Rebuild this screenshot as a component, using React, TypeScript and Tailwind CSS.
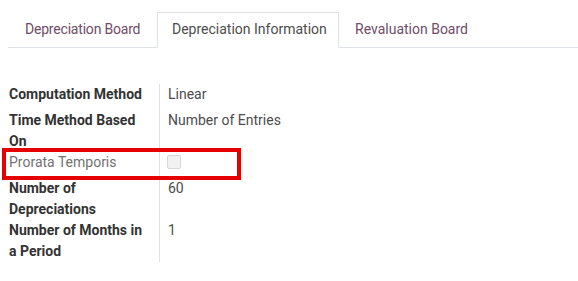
import React from "react";

const rows: { label: string; value: React.ReactNode; muted?: boolean; h: string }[] = [
  { label: "Computation Method", value: "Linear", h: "min-h-[26px]" },
  { label: "Time Method Based On", value: "Number of Entries", h: "min-h-[26px]" },
  { label: "Prorata Temporis", value: "checkbox", muted: true, h: "min-h-[26px]" },
  { label: "Number of Depreciations", value: "60", h: "min-h-[26px]" },
  { label: "Number of Months in a Period", value: "1", h: "min-h-[26px]" },
];

export default function App() {
  return (
    <div className="relative w-[578px] h-[281px] bg-white overflow-hidden pt-[12px] text-[14px] leading-[21px]" style={{ fontFamily: "Roboto, 'Liberation Sans', sans-serif" }}>
      <div className="ml-[8px] flex border-b border-[#dee2e6] h-[36px] whitespace-nowrap">
        <div className="w-[149px] pl-[16px] pt-[6px] h-[35px] text-[#714B67] border border-transparent tracking-[-0.2px]">Depreciation Board</div>
        <div className="w-[182px] pl-[14px] pt-[6px] h-[36px] text-[#4c4c4c] border border-[#dee2e6] border-b-white bg-white -mb-px">Depreciation Information</div>
        <div className="pl-[15px] pr-[16px] pt-[6px] h-[35px] text-[#714B67] border border-transparent">Revaluation Board</div>
      </div>
      <div className="mt-[36px] flex flex-col">
        {rows.map((r) => (
          <div key={r.label} className={`flex ${r.h}`}>
            <div className={`w-[160px] shrink-0 border-r border-[#dee2e6] pl-[9px] pr-[12px] ${r.muted ? "text-[#727272] font-normal" : "text-[#333333] font-bold"}`}>
              {r.label}
            </div>
            <div className="pl-[8px] text-[#4c4c4c]">
              {r.value === "checkbox" ? (
                <div className="mt-[3px] -ml-[1px] w-[14px] h-[14px] bg-[#f1f1f1] border border-[#d8d8d8] rounded-[2px]" />
              ) : (
                r.value
              )}
            </div>
          </div>
        ))}
      </div>
      <div className="absolute left-[2px] top-[148px] w-[239px] h-[32px] border-[4px] border-[#e60000]" />
    </div>
  );
}
